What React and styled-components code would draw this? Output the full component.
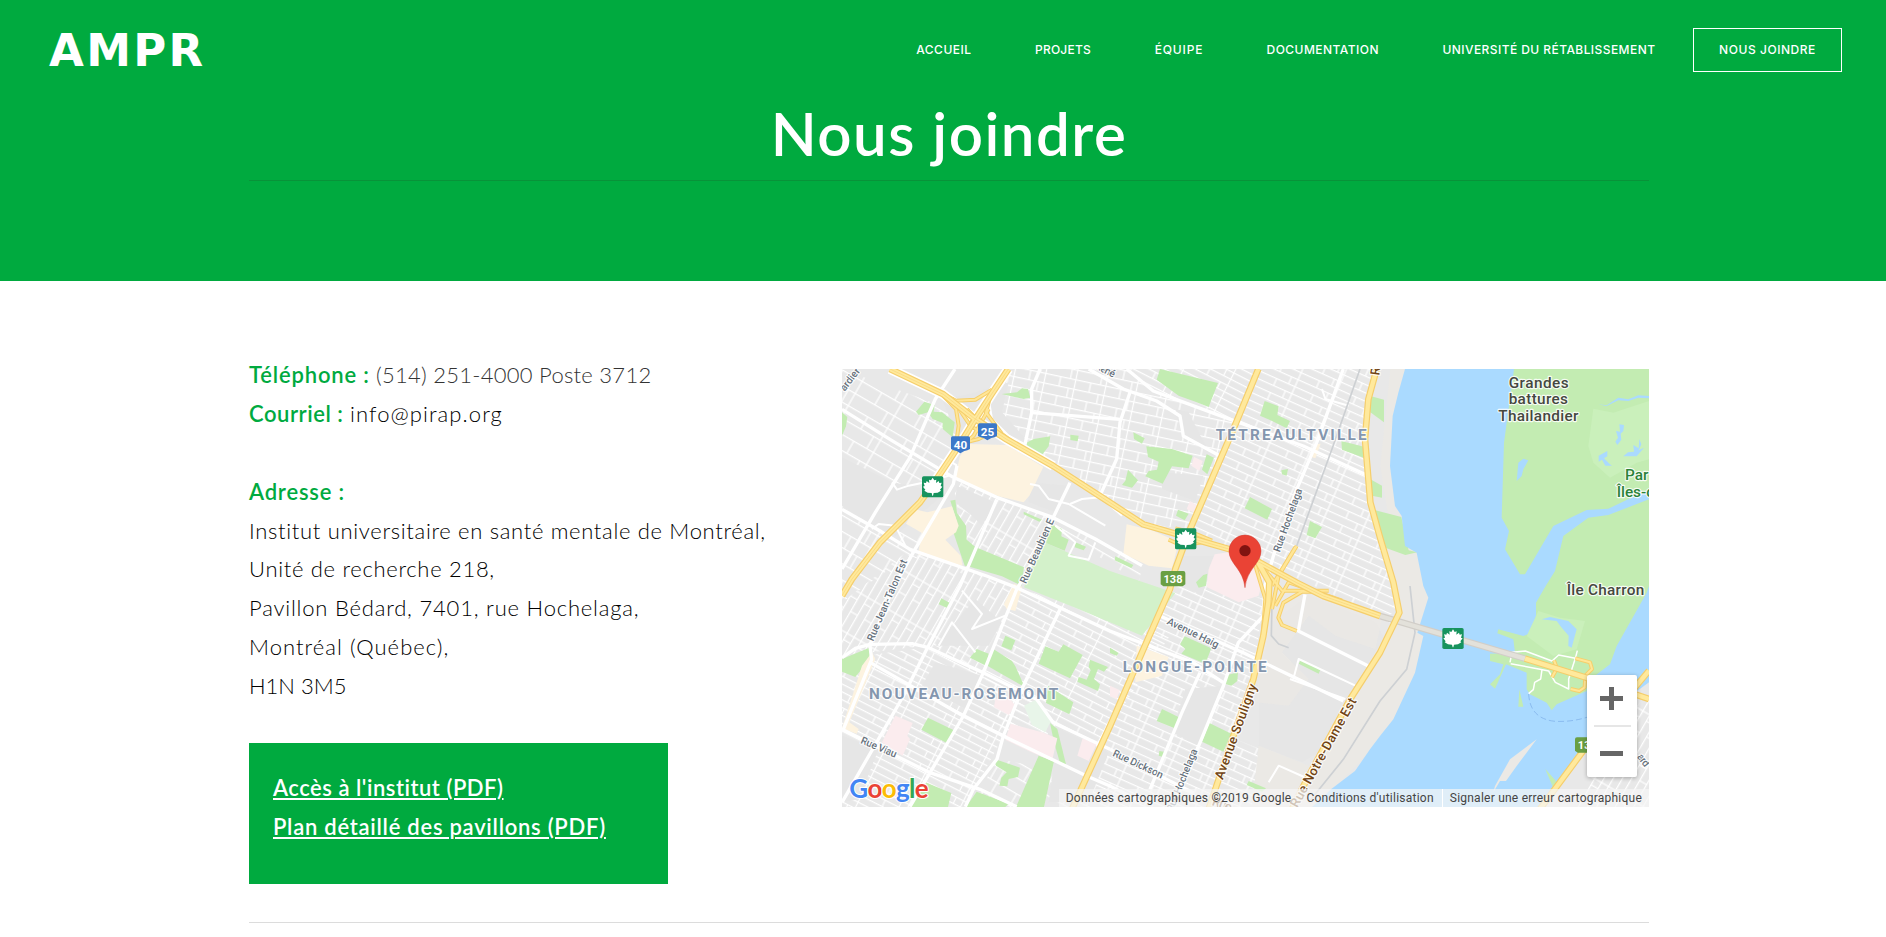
import React from "react";
import styled, { createGlobalStyle, css } from "styled-components";

const GREEN = "#00aa3f";

const GlobalStyle = createGlobalStyle`
  * { box-sizing: border-box; }
  html, body { margin: 0; padding: 0; background: #fff; overflow: hidden; }
  body { font-family: Lato, "Open Sans", sans-serif; color: #0c0c0c; }
`;

const Page = styled.div`
  width: 100%;
  height: 937px;
  overflow: hidden;
`;

const Hero = styled.header`
  height: 281px;
  background: ${GREEN};
  color: #fff;
`;

const TopBar = styled.div`
  display: flex;
  align-items: center;
  justify-content: space-between;
  height: 100px;
  padding: 0 44px 0 49px;
`;

const Logo = styled.a`
  padding-top: 2px;
  font: 700 45px/60px "DejaVu Sans", sans-serif;
  letter-spacing: 2.3px;
  color: #fff;
`;

const Nav = styled.nav`
  display: flex;
  align-items: center;
  gap: 64px;
`;

const NavLink = styled.a`
  font: 500 12px/20px Inter, sans-serif;
  letter-spacing: ${(p) => p.$track}px;
  margin-right: ${(p) => -p.$track}px;
  white-space: nowrap;
  color: #fff;
  ${(p) =>
    p.$boxed &&
    css`
      margin: 0 0 0 -26px;
      width: 149px;
      height: 44px;
      line-height: 42px;
      text-align: center;
      border: 1px solid #fff;
    `}
`;

const Wrap = styled.div`
  margin: 0 237px 0 249px;
`;

const Title = styled.h1`
  margin: 0;
  height: 80px;
  font-size: 60px;
  font-weight: 600;
  line-height: 66px;
  letter-spacing: 1.5px;
  text-align: center;
`;

const Rule = styled.hr`
  margin: 0;
  border: 0;
  height: 1px;
  background: ${(p) => (p.$dark ? "#089339" : "#dcdcdc")};
`;

const Columns = styled.main`
  display: grid;
  grid-template-columns: 593px 807px;
  padding-top: 74px;
  height: 641px;
`;

const Details = styled.section`
  padding-top: 1px;
`;

const Line = styled.p`
  margin: 0;
  height: 38.9px;
  font-size: 22px;
  font-weight: 300;
  line-height: 38.9px;
  white-space: nowrap;
  letter-spacing: ${(p) => p.$track || 0}px;
  color: ${(p) => (p.$soft ? "#333" : "#000")};
`;

const Label = styled.strong`
  display: inline-block;
  width: ${(p) => p.$width}px;
  font-weight: 600;
  letter-spacing: ${(p) => p.$track}px;
  color: ${GREEN};
`;

const Downloads = styled.div`
  width: 419px;
  height: 141px;
  margin-top: 37px;
  padding: 25px 24px 0;
  background: ${GREEN};
`;

const FileLink = styled.a`
  display: block;
  width: max-content;
  font-size: 22px;
  font-weight: 600;
  line-height: 39px;
  letter-spacing: ${(p) => p.$track}px;
  color: #fff;
  text-decoration: underline;
  text-decoration-thickness: 2px;
  text-underline-offset: 2px;
`;

const MapFrame = styled.section`
  position: relative;
  width: 807px;
  height: 438px;
  margin-top: 14px;
  overflow: hidden;
  background: #e8e8e8;
`;

const MapArt = styled.svg`
  display: block;
  width: 807px;
  height: 438px;
  font-family: Roboto, sans-serif;
`;

const Attribution = styled.div`
  position: absolute;
  right: 0;
  bottom: 0;
  display: flex;
  height: 18px;
  padding-left: 7px;
  background: rgba(245, 245, 245, 0.72);
  font: 12px/19px Roboto, sans-serif;
  letter-spacing: 0.235px;
  color: #444;
  white-space: nowrap;
`;

const Credit = styled.span`
  padding-right: ${(p) => p.$gap}px;
  & + & + & {
    border-left: 1px solid #fff;
    padding-left: 7px;
  }
`;

const ZoomBox = styled.div`
  position: absolute;
  right: 12px;
  top: 306px;
  display: flex;
  flex-direction: column;
  align-items: center;
  width: 50px;
  height: 102px;
  background: #fff;
  border-radius: 2px;
  box-shadow: 0 1px 4px rgba(0, 0, 0, 0.3);
`;

const ZoomButton = styled.button`
  display: grid;
  place-items: center;
  width: 50px;
  height: 50px;
  padding: 0 2px 4px 0;
  border: 0;
  background: none;
  & + span + & {
    height: 52px;
    padding: 4px 2px 0 0;
  }
`;

const ZoomRule = styled.span`
  width: 37px;
  height: 2px;
  margin-bottom: -2px;
  background: #e6e6e6;
`;

/* Map drawing: three units per pixel */

const PARK = "#c3ecb2";
const WATER = "#aadaff";

const parks = [
  "479,75 525,70 540,58 558,60 565,86 545,90 508,82",
  "222,128 247,98 278,108 275,128 300,130 338,160 332,205 302,180 302,162 272,150 258,130 230,138",
  "0,130 16,144 12,172 0,200",
  "552,222 575,210 625,202 620,232 600,258 556,232",
  "685,197 710,200 707,217 685,213",
  "325,395 340,392 345,432 372,470 374,512 400,534 546,595 538,650 480,622 378,592 368,590 334,490 345,460",
  "545,428 600,452 592,458 545,436",
  "626,466 660,480 658,502 680,512 668,545 612,522",
  "700,520 732,533 725,544 698,535",
  "820,562 874,588 868,597 818,574",
  "954,0 1128,42 1100,114 1060,98 1010,80 944,32",
  "1268,96 1310,112 1306,138 1344,156 1334,178 1282,152 1254,140",
  "874,190 908,208 900,224 876,210",
  "913,232 990,240 1052,260 1040,298 990,292 962,344 910,322 920,306 945,302 950,278 918,264",
  "1094,256 1116,266 1096,316 1080,302",
  "858,302 888,334 870,356 840,348 850,335",
  "1008,422 1040,434 1028,454 1002,440",
  "1224,384 1290,420 1276,452 1208,418",
  "1404,456 1440,474 1420,508 1394,498",
  "1318,304 1338,300 1334,320 1320,316",
  "1498,216 1569,234 1569,268 1500,242",
  "1582,80 1626,92 1626,160 1585,130",
  "1580,328 1620,350 1620,386 1590,380",
  "1600,424 1678,444 1700,544 1726,550 1690,558 1630,536",
  "1084,618 1096,614 1092,650 1070,656 1062,640",
  "0,870 82,836 84,870 40,924 0,908",
  "298,688 324,702 318,718 290,706",
  "404,840 440,854 432,890 384,866",
  "490,800 520,814 508,844 478,832",
  "454,840 510,876 520,892 548,954 480,916 436,890",
  "610,832 650,848 664,826 722,858 684,928 590,884",
  "744,872 798,894 786,908 768,900 756,930 774,946 768,966 706,938 710,924 734,932 746,904 740,894",
  "618,950 694,1000 682,1036 612,1002",
  "258,1046 336,1084 314,1122 238,1082",
  "624,1062 646,1080 672,1186 654,1182 636,1120",
  "458,1170 534,1196 528,1224 500,1230 496,1252 472,1250 478,1226 494,1210 462,1190",
  "590,1160 636,1176 606,1314 522,1314",
  "250,1240 328,1272 318,1314 204,1314",
  "404,1268 500,1304 490,1314 372,1314",
  "1028,802 1108,838 1090,884 1018,854 1030,840 1014,826",
  "804,836 830,852 824,860 804,852",
  "1156,918 1188,910 1186,936 1168,950 1148,944",
  "960,1020 1014,1046 998,1078 944,1056",
  "1102,1062 1168,1094 1144,1148 1080,1118",
  "1376,874 1436,900 1430,914 1370,884",
  "1220,1236 1272,1258 1260,1268 1214,1248",
  "952,1146 966,1148 962,1164 950,1160",
];

const fields = [
  "612,522 804,606 1000,672 900,800 700,716 546,655 570,590",
];

const retail = [
  "380,225 494,228 604,294 562,380 545,400 520,394 470,382 338,330 354,262",
  "216,420 256,430 330,412 350,470 342,490 310,512 356,560 362,590 228,556 240,492 192,464",
  "854,466 930,484 1010,520 990,598 920,590 844,554",
  "486,706 516,644 540,654 520,726 494,720",
  "884,830 980,864 960,920 880,940",
  "60,890 90,850 100,870 22,1060 50,1080 44,1094 0,1078",
  "1420,226 1436,224 1420,268 1402,262",
];

const hospitals = [
  "1118,556 1170,548 1240,582 1264,628 1250,680 1190,700 1094,654 1100,600",
  "160,1040 212,1062 196,1100 204,1110 182,1160 120,1120",
  "460,990 500,984 520,1010 500,1038 456,1014",
  "506,1064 600,1090 646,1108 630,1176 560,1146 490,1112",
  "722,1108 764,1126 740,1176 706,1160",
  "1056,264 1082,276 1072,306 1048,290",
  "1044,396 1070,412 1060,432 1034,420",
  "804,950 834,964 824,990 804,982",
];

const plain = [
  "0,265 150,340 210,350 300,380 240,430 160,500 90,470 0,410",
  "344,350 460,400 420,470 390,440 340,400",
  "380,76 500,40 480,130 560,220 470,190 360,240 300,90",
  "560,340 680,350 640,430 560,400",
  "960,310 1084,320 1060,396 960,360",
  "1000,120 1040,130 1100,250 1020,200",
  "610,1060 800,1150 740,1300 620,1300 636,1180",
  "280,880 420,920 370,1020 240,950",
  "0,1100 110,1140 50,1290 0,1300",
  "400,690 480,760 440,830 280,830",
  "1030,960 1140,950 1070,1130 990,1090",
  "1000,560 1120,560 1080,680 1000,640",
  "1400,680 1600,760 1640,830 1500,1000 1450,1140 1380,1180 1250,1130 1250,940 1290,760",
];

const whiteRoads = [
  "0,121 150,215 334,325 464,385 634,446 760,510 900,590",
  "339,0 280,90 204,265 100,430 0,600",
  "345,290 334,345 219,541 150,665 84,831 89,871 4,1081",
  "0,421 104,480 204,541 434,621 524,656 804,786 1054,881 1144,941",
  "464,391 354,651 254,841 184,981 0,1300",
  "684,341 554,611 524,661 424,911 364,1041 204,1313",
  "654,721 544,951 484,1101 465,1170 394,1261 370,1313",
  "0,866 40,838 84,826 210,824 260,836 424,911 584,991 634,1061 804,1141",
  "84,880 364,1041 484,1101 734,1221 804,1251 900,1300",
  "0,1081 264,1211 414,1261 524,1313",
  "594,0 569,60 569,131 549,226",
  "569,131 834,151",
  "864,70 834,160 824,270 774,380",
  "740,0 844,60 944,96 1014,141 1024,201 1134,261",
  "854,0 934,66 1124,136 1384,231 1569,316",
  "1504,0 1424,221 1364,361 1294,561 1269,651 1264,741 1189,821 1144,951 1074,1121 990,1313",
  "954,741 1204,851 1504,996",
  "1074,911 1020,1030 924,1261",
  "1389,676 1369,786 1579,891",
  "804,1141 934,1211 1054,1271",
];

const smallRoads = [
  "440,90 450,150 500,200 549,226",
  "564,345 590,350 620,390 680,405 790,470",
  "684,405 720,390 775,385 840,440",
  "150,340 165,362 200,350 250,340 320,320",
  "345,290 330,280 310,315",
  "640,470 700,520 680,560 740,572 760,520",
  "90,480 110,465 160,470 190,530",
  "290,830 330,760 400,850",
  "360,665 420,735 390,780 490,740",
  "1354,930 1370,870 1540,950",
  "1344,930 1510,990",
  "1280,1240 1310,1190 1400,1230",
  "1614,741 1654,765",
  "1440,60 1450,90 1520,110",
];

const highways = [
  "144,0 304,76 394,146 494,211 634,291 804,401 904,466 1024,501 1164,541 1254,581 1364,641 1444,681 1614,741",
  "499,0 449,75 394,160 354,225 284,330 234,400 114,520 30,630 0,680",
  "1249,0 1174,181 1044,481 1000,600 984,660 904,841 804,1071 690,1320",
  "1604,0 1579,91 1569,211 1585,400 1614,505 1654,640 1672,731 1614,851 1524,991 1390,1240 1350,1320",
  "1240,565 1282,640 1279,700 1264,801 1234,931 1174,1101 1110,1290 1100,1320",
  "2049,869 2230,925 2421,990",
  "2421,905 2250,1110 2094,1320",
];

const ramps = [
  "290,68 342,95 400,92 450,62",
  "300,76 342,120 350,170 340,240",
  "450,62 432,130 480,195 520,225",
  "330,88 385,170 440,205",
  "350,240 395,200 440,120",
  "350,225 410,210 450,190 530,230",
  "375,120 420,170",
  "380,170 415,125",
  "1364,531 1310,620 1290,720",
  "1360,535 1290,650",
  "1440,668 1380,668 1324,701 1309,746 1320,768 1364,786",
  "1250,580 1320,665 1460,665",
  "1240,590 1270,690 1262,800",
  "1000,478 1050,490 1110,515",
  "1500,695 1340,640 1300,710",
  "980,512 1020,530 1080,520",
  "2130,925 2145,898 2136,874",
  "2200,868 2244,880 2250,900 2230,920 2228,955 2212,966 2186,960",
];

const mapLabels = [
  { t: "TÉTREAULTVILLE", x: 1121, y: 213, w: 453, kind: "area" },
  { t: "LONGUE-POINTE", x: 842, y: 909, w: 432, kind: "area" },
  { t: "NOUVEAU-ROSEMONT", x: 81, y: 989, w: 568, kind: "area" },
  { t: "Grandes", x: 2000, y: 57, w: 180, kind: "place" },
  { t: "battures", x: 2000, y: 106, w: 178, kind: "place" },
  { t: "Thailandier", x: 1969, y: 155, w: 240, kind: "place" },
  { t: "Île Charron", x: 2174, y: 678, w: 233, kind: "place" },
  { t: "Par", x: 2349, y: 334, kind: "park" },
  { t: "Îles-c", x: 2324, y: 383, kind: "park" },
  { t: "Rue Hochelaga", x: 1313, y: 551, w: 200, r: -70 },
  { t: "Rue Beaubien E", x: 552, y: 646, w: 210, r: -66 },
  { t: "Rue Jean-Talon Est", x: 94, y: 818, w: 262, r: -67 },
  { t: "Rue Viau", x: 54, y: 1122, w: 114, r: 23 },
  { t: "Avenue Haig", x: 973, y: 764, w: 168, r: 26 },
  { t: "Rue Dickson", x: 810, y: 1160, w: 163, r: 25 },
  { t: "Rue Hochelaga", x: 992, y: 1330, w: 200, r: -68 },
  { t: "ardier", x: 8, y: 68, w: 78, r: -52 },
  { t: "René", x: 758, y: -2, w: 62, r: 27 },
  { t: "ard", x: 2384, y: 1164, w: 40, r: 52 },
  { t: "Avenue Souligny", x: 1142, y: 1234, w: 302, r: -70, kind: "main" },
  { t: "Rue Notre-Dame Est", x: 1366, y: 1318, w: 368, r: -61, kind: "main" },
  { t: "Rue", x: 1612, y: 20, w: 60, r: -82, kind: "main" },
  { t: "Rue", x: 1108, y: 1308, w: 60, r: 20, kind: "main" },
];

const labelStyles = {
  area: { size: 46, fill: "#8496ae", weight: 700 },
  place: { size: 46, fill: "#45483f", weight: 500 },
  park: { size: 46, fill: "#2b8239", weight: 500 },
  main: { size: 39, fill: "#714414", weight: 500 },
  street: { size: 31, fill: "#66717c", weight: 500 },
};

const MapLabel = ({ t, x, y, w, r = 0, kind = "street" }) => {
  const s = labelStyles[kind];
  return (
    <text
      transform={`translate(${x} ${y}) rotate(${r})`}
      textLength={w}
      fontSize={s.size}
      fontWeight={s.weight}
      fill={s.fill}
      stroke="#fff"
      strokeOpacity="0.85"
      strokeWidth="7"
      strokeLinejoin="round"
      paintOrder="stroke"
    >
      {t}
    </text>
  );
};

const Lines = ({ items, color, width }) => (
  <g fill="none" stroke={color} strokeWidth={width} strokeLinejoin="round">
    {items.map((p) => (
      <polyline key={p} points={p} />
    ))}
  </g>
);

const Areas = ({ items, fill }) => (
  <g fill={fill}>
    {items.map((p) => (
      <polygon key={p} points={p} />
    ))}
  </g>
);

const Streets = ({ id, w, h, angle }) => (
  <pattern
    id={id}
    width={w * 2}
    height={h * 2}
    patternUnits="userSpaceOnUse"
    patternTransform={`rotate(${angle})`}
  >
    <path
      d={`M0 2H${w * 2}M0 ${h + 2}H${w * 2}M3 0V${h}M${w * 0.7} ${h}V${h * 2}M${w + 3} 0V${h * 2}`}
      fill="none"
      stroke="#fff"
      strokeWidth="3.6"
    />
  </pattern>
);

const MapleShield = ({ x, y }) => (
  <g transform={`translate(${x} ${y})`}>
    <rect width="64" height="63" rx="5" fill="#17935e" />
    <path
      d="M32 4L37 12 43 10 42 20 50 14 52 20 59 19 56 29 61 31 54 40 57 43 47 49 35 50 33 58H31L29 50 17 49 7 43 10 40 3 31 8 29 5 19 12 20 14 14 22 20 21 10 27 12Z"
      fill="#fff"
    />
  </g>
);

const RouteShield = ({ x, y, n }) => (
  <g transform={`translate(${x} ${y})`}>
    <path d="M5 0H52Q57 0 57 5V38Q50 43 40 44L28 51 17 44Q7 43 0 38V5Q0 0 5 0Z" fill="#3b78c9" />
    <text x="28.5" y="38" textAnchor="middle" fontSize="35" fontWeight="700" fill="#fff">
      {n}
    </text>
  </g>
);

const ProvinceShield = ({ x, y }) => (
  <g transform={`translate(${x} ${y})`}>
    <path d="M6 0H68Q74 0 74 6V40L66 46H8L0 40V6Q0 0 6 0Z" fill="#6a9f43" />
    <text x="37" y="36" textAnchor="middle" fontSize="33" fontWeight="700" fill="#fff">
      138
    </text>
  </g>
);

const GoogleMark = () => (
  <text
    x="22"
    y="1286"
    fontFamily="Lato, sans-serif"
    fontSize="78"
    fontWeight="700"
    textLength="238"
    stroke="#fff"
    strokeWidth="6"
    strokeLinejoin="round"
    paintOrder="stroke"
  >
    <tspan fill="#4285f4">G</tspan>
    <tspan fill="#ea4335">o</tspan>
    <tspan fill="#fbbc05">o</tspan>
    <tspan fill="#4285f4">g</tspan>
    <tspan fill="#34a853">l</tspan>
    <tspan fill="#ea4335">e</tspan>
  </text>
);

const CityMap = () => (
  <MapArt viewBox="0 0 2421 1314" preserveAspectRatio="none">
    <defs>
      <Streets id="wide" w={68} h={42} angle={30} />
      <Streets id="curvy" w={46} h={29} angle={12} />
      <Streets id="tight" w={60} h={23} angle={24} />
      <Streets id="rows" w={70} h={21} angle={27} />
      <Streets id="steep" w={62} h={24} angle={-60} />
    </defs>
    <rect width="2421" height="1314" fill="#e8e8e8" />
    <polygon points="0,0 394,146 234,400 380,620 200,560 0,700" fill="url(#wide)" />
    <polygon points="394,146 500,0 860,0 940,66 1180,160 1044,481 904,466" fill="url(#curvy)" />
    <polygon points="860,0 1249,0 1180,160 940,66" fill="url(#rows)" />
    <polygon points="1249,0 1604,0 1569,211 1585,400 1672,731 1614,741 1250,575 1044,481" fill="url(#tight)" />
    <polygon points="330,330 640,450 560,640 380,590" fill="url(#steep)" />
    <polygon points="0,700 204,541 520,655 424,911 244,831 0,860" fill="url(#steep)" />
    <polygon points="524,656 984,800 804,1071 740,1220 484,1101 424,911" fill="url(#rows)" />
    <polygon points="0,870 244,836 424,915 584,991 484,1101 370,1314 0,1314" fill="url(#rows)" />
    <polygon points="464,1170 740,1220 700,1314 390,1314" fill="url(#wide)" />
    <polygon points="1000,600 1264,690 1234,931 1110,1314 700,1314" fill="url(#tight)" />
    <polygon points="634,446 904,580 890,640 640,480" fill="url(#wide)" />
    <polygon points="1180,1110 1400,1200 1350,1314 1110,1314" fill="url(#tight)" />
    <Areas items={plain} fill="#e6e6e6" />
    <polygon
      points="1645,0 1700,0 1760,680 1730,1000 1420,1314 1230,1314 1250,1130 1400,1190 1460,1120 1520,980 1672,731 1654,640 1614,505 1640,450 1615,290"
      fill="#ebe9e5"
    />
    <polygon points="1290,660 1440,681 1620,750 1600,840 1480,800 1400,740 1320,850 1400,930 1340,1010 1240,1000" fill="#ebe9e5" opacity=".8" />
    <Areas items={fields} fill="#d3f1ca" />
    <Areas items={parks} fill={PARK} />
    <Areas items={retail} fill="#fdf3e0" />
    <Areas items={hospitals} fill="#fbecee" />
    <polygon points="546,1010 584,991 630,1050 610,1090 570,1068" fill="#e8f5e9" />

    <polygon
      points="1689,0 1669,71 1652,141 1644,291 1659,411 1679,441 1689,531 1724,551 1744,651 1759,686 1726,791 1744,801 1719,911 1654,1051 1614,1101 1584,1141 1539,1206 1469,1259 1410,1314 2421,1314 2421,0"
      fill={WATER}
    />
    <Areas
      fill={PARK}
      items={[
        "2016,0 1986,221 1979,446 2001,486 1989,541 2034,616 2049,616 2134,471 2234,423 2299,419 2421,361 2421,0",
        "2421,391 2299,438 2239,446 2164,501 2139,606 2111,651 2082,701 2082,741 2069,791 2044,801 1969,781 1966,793 2014,811 2019,851 1944,854 1944,876 1984,886 1974,916 1944,946 1959,959 1992,886 2054,911 2054,961 2064,976 2114,1001 2129,1024 2144,1006 2234,966 2234,940 2304,886 2324,831 2414,671 2421,651",
        "2032,961 2044,1013 2029,1013",
      ]}
    />
    <Areas
      fill="#caf0bb"
      items={[
        "2254,119 2314,131 2421,96 2421,271 2384,281 2304,326 2254,281 2239,231",
        "2089,726 2154,746 2229,756 2204,841 2134,861 2054,801",
      ]}
    />
    <Areas
      fill={WATER}
      items={[
        "2029,281 2044,269 2059,274 2044,301 2039,321 2024,336",
        "2269,106 2294,109 2329,86 2359,91 2389,79 2421,81 2421,88 2389,86 2359,96 2329,94 2294,111",
        "2099,751 2124,744 2179,756 2204,781 2196,810 2189,836 2179,831 2180,800 2158,775 2144,756",
        "2322,186 2334,188 2332,166 2346,168 2344,186 2336,194 2338,212 2326,228 2320,218 2328,206",
        "2344,262 2358,250 2376,248 2374,228 2390,238 2392,210 2398,226 2390,244 2406,236 2384,262",
        "2270,260 2296,246 2296,262 2286,268 2304,286 2310,290 2290,290 2280,272 2270,278",
      ]}
    />
    <polygon points="2084,1111 2004,1171 1959,1251 1954,1270 1974,1236 1992,1236 2024,1191" fill="#ebe9e5" />
    <polygon points="2110,1314 2215,1150 2300,1050 2380,970 2421,940 2421,1314" fill="#e8e8e8" />
    <polygon points="2200,1314 2280,1130 2421,970 2421,1314" fill="url(#steep)" />
    <polygon points="2110,1200 2142,1236 2136,1262" fill={PARK} />
    <path d="M2060 975Q2064 1050 2140 1057Q2200 1060 2260 1036" fill="none" stroke="#8bbcf0" strokeWidth="3" strokeDasharray="18 9" />

    <Lines items={smallRoads} color="#fff" width={6} />
    <Lines items={whiteRoads} color="#fff" width={10} />
    <Lines
      items={["1554,0 1470,240 1364,531", "1704,651 1719,791 1694,901 1614,996 1504,1171 1400,1300", "1290,700 1288,800 1310,825 1340,836"]}
      color="#cdd0d3"
      width={5}
    />
    <Lines
      items={["2004,880 2010,850 2050,846 2130,876 2150,858 2200,868 2206,845", "2006,884 2090,900 2120,906 2140,940 2180,960 2180,930 2200,868", "2100,902 2096,930 2078,940 2074,962 2060,974"]}
      color="#fff"
      width={4.5}
    />
    <Lines items={["1614,741 2049,869"]} color="#d2cec8" width={20} />
    <Lines items={["1614,741 2049,869"]} color="#e3e1da" width={13} />
    <Lines items={["144,0 304,76 394,146 494,211 634,291", "499,0 449,75 394,160 354,225 284,330"]} color="#fff" width={30} />
    <Lines items={ramps} color="#f6cf6b" width={12} />
    <Lines items={ramps} color="#ffe697" width={6} />
    <Lines items={highways} color="#f5ce6c" width={20} />
    <Lines items={highways} color="#ffe99c" width={13} />
    <Lines items={highways.slice(0, 2)} color="#f8d47a" width={2} />

    {mapLabels.map((l, i) => (
      <MapLabel key={i} {...l} />
    ))}
    <RouteShield x={327} y={202} n="40" />
    <RouteShield x={408} y={163} n="25" />
    <MapleShield x={240} y={322} />
    <MapleShield x={999} y={478} />
    <MapleShield x={1801} y={777} />
    <ProvinceShield x={956} y={606} />
    <ProvinceShield x={2199} y={1105} />
    <path d="M1209 656C1204 600 1161 584 1161 546A48 48 0 0 1 1257 546C1257 584 1214 600 1209 656Z" fill="#ea4335" stroke="#d33c30" strokeWidth="1.5" />
    <circle cx="1209" cy="545" r="17" fill="#811411" />
    <GoogleMark />
  </MapArt>
);

const navItems = [
  ["ACCUEIL", 0.5],
  ["PROJETS", 0.2],
  ["ÉQUIPE", 0.85],
  ["DOCUMENTATION", 0.46],
  ["UNIVERSITÉ DU RÉTABLISSEMENT", 0.43],
];

export default function App() {
  return (
    <Page>
      <GlobalStyle />
      <Hero>
        <TopBar>
          <Logo>AMPR</Logo>
          <Nav>
            {navItems.map(([name, track]) => (
              <NavLink key={name} $track={track}>
                {name}
              </NavLink>
            ))}
            <NavLink $boxed $track={0.55}>
              NOUS JOINDRE
            </NavLink>
          </Nav>
        </TopBar>
        <Wrap>
          <Title>Nous joindre</Title>
          <Rule $dark />
        </Wrap>
      </Hero>
      <Wrap>
        <Columns>
          <Details>
            <Line $soft $track={0.27}>
              <Label $width={127} $track={0.84}>Téléphone :</Label>
              (514) 251-4000 Poste 3712
            </Line>
            <Line $track={1.08}>
              <Label $width={101} $track={0.54}>Courriel :</Label>
              info@pirap.org
            </Line>
            <Line />
            <Line>
              <Label $width={100} $track={0.8}>Adresse :</Label>
            </Line>
            <Line $track={0.68}>Institut universitaire en santé mentale de Montréal,</Line>
            <Line $track={0.69}>Unité de recherche 218,</Line>
            <Line $track={0.8}>Pavillon Bédard, 7401, rue Hochelaga,</Line>
            <Line $track={1.05}>Montréal (Québec),</Line>
            <Line>H1N 3M5</Line>
            <Downloads>
              <FileLink $track={0.52}>Accès à l'institut (PDF)</FileLink>
              <FileLink $track={0.74}>Plan détaillé des pavillons (PDF)</FileLink>
            </Downloads>
          </Details>
          <MapFrame>
            <CityMap />
            <Attribution>
              <Credit $gap={15}>Données cartographiques ©2019 Google</Credit>
              <Credit $gap={8}>Conditions d'utilisation</Credit>
              <Credit $gap={7}>Signaler une erreur cartographique</Credit>
            </Attribution>
            <ZoomBox>
              <ZoomButton aria-label="Zoom avant">
                <svg width="23" height="23" viewBox="0 0 23 23">
                  <path d="M9 0h5v9h9v5h-9v9h-5v-9H0v-5h9z" fill="#666" />
                </svg>
              </ZoomButton>
              <ZoomRule />
              <ZoomButton aria-label="Zoom arrière">
                <svg width="23" height="5" viewBox="0 0 23 5">
                  <path d="M0 0h23v5H0z" fill="#666" />
                </svg>
              </ZoomButton>
            </ZoomBox>
          </MapFrame>
        </Columns>
        <Rule />
      </Wrap>
    </Page>
  );
}
